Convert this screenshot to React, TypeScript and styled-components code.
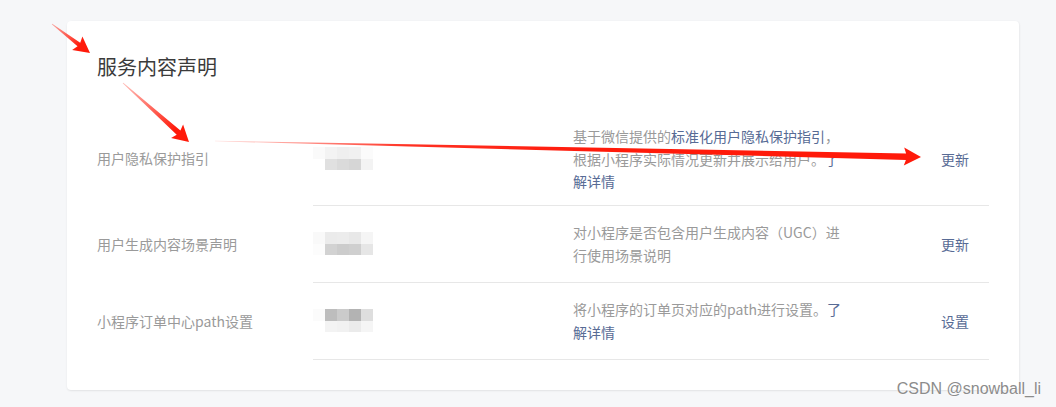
import * as React from 'react';
import styled, { createGlobalStyle } from 'styled-components';

const GlobalStyle = createGlobalStyle`
  html, body {
    margin: 0;
    padding: 0;
    background: #f6f7f9;
  }
  body {
    font-family: "Noto Sans CJK SC", "Noto Sans", sans-serif;
    -webkit-font-smoothing: antialiased;
  }
`;

const Page = styled.main`
  position: relative;
  width: 1056px;
  height: 407px;
  box-sizing: border-box;
  padding: 21px 37px 0 67px;
  overflow: hidden;
`;

const Card = styled.section`
  background: #fff;
  border-radius: 4px;
  box-shadow: 0 1px 2px rgba(0, 0, 0, 0.08), 1px 0 2px rgba(0, 0, 0, 0.03);
  padding: 32px 30px 30px 30px;
`;

const Title = styled.h2`
  margin: 0 0 28.5px 0;
  font-size: 20px;
  line-height: 28px;
  font-weight: 400;
  color: #3b3b3b;
`;

const List = styled.div`
  display: flex;
  flex-direction: column;
`;

const Row = styled.div`
  display: grid;
  grid-template-columns: 216px 1fr;
  align-items: stretch;

  &:first-child > div:last-child {
    padding-bottom: 12px;
  }
`;

const Label = styled.div`
  display: flex;
  align-items: center;
  font-size: 14px;
  color: #9a9a9a;
  white-space: nowrap;
`;

const Content = styled.div`
  display: grid;
  grid-template-columns: 260px 368px 1fr;
  align-items: center;
  padding: 15.5px 0 15.5px 0;
  border-bottom: 1px solid #e7e7e7;
`;

const Value = styled.div`
  display: flex;
  align-items: center;
`;

const MosaicGrid = styled.div`
  display: grid;
  grid-template-columns: 12px 12px 12px 12px 12px;
  grid-template-rows: 12px 11px;
`;

const Cell = styled.span<{ $c: string }>`
  background: ${(p) => p.$c};
`;

const Desc = styled.div`
  width: 275px;
  font-size: 14px;
  line-height: 22.5px;
  color: #9a9a9a;
`;

const Link = styled.a`
  color: #576b95;
  text-decoration: none;
  cursor: pointer;
`;

const Action = styled.a`
  font-size: 14px;
  color: #576b95;
  cursor: pointer;
`;

const Overlay = styled.svg`
  position: absolute;
  left: 0;
  top: 0;
  pointer-events: none;
`;

const Watermark = styled.div`
  position: absolute;
  right: 15px;
  bottom: 9px;
  font-family: "Liberation Sans", Arial, sans-serif;
  font-size: 16px;
  color: #8c8c8c;
  text-shadow: 0 0 2px #fff;
  pointer-events: none;
`;

type Item = {
  label: string;
  mosaic: string[][];
  desc: React.ReactNode;
  action: string;
};

const items: Item[] = [
  {
    label: '用户隐私保护指引',
    mosaic: [
      ['#fafafa', '#f3f3f3', '#efefef', '#f1f1f1', '#fbfbfb'],
      ['#ffffff', '#e0e0e0', '#dadada', '#d6d6d6', '#f3f3f3'],
    ],
    desc: (
      <>
        基于微信提供的<Link>标准化用户隐私保护指引</Link>，根据小程序实际情况更新并展示给用户。
        <Link>了解详情</Link>
      </>
    ),
    action: '更新',
  },
  {
    label: '用户生成内容场景声明',
    mosaic: [
      ['#f9f9f9', '#ebebeb', '#ececec', '#e8e8e8', '#f5f5f5'],
      ['#fcfcfc', '#d2d2d2', '#cccccc', '#cfcfcf', '#e6e6e6'],
    ],
    desc: <>对小程序是否包含用户生成内容（UGC）进行使用场景说明</>,
    action: '更新',
  },
  {
    label: '小程序订单中心path设置',
    mosaic: [
      ['#fbfbfb', '#bdbdbd', '#cbcbcb', '#b3b3b3', '#dedede'],
      ['#ffffff', '#f3f3f3', '#f1f1f1', '#ebebeb', '#f5f5f5'],
    ],
    desc: (
      <>
        将小程序的订单页对应的path进行设置。<Link>了解详情</Link>
      </>
    ),
    action: '设置',
  },
];

type Pt = [number, number];

// tapered arrow: thin tail, wider shaft near the head, triangular head
function arrowPoints(tail: Pt, tip: Pt, headLen: number, headHalf: number, w0: number, w1: number) {
  const dx = tip[0] - tail[0];
  const dy = tip[1] - tail[1];
  const len = Math.hypot(dx, dy);
  const ux = dx / len;
  const uy = dy / len;
  const nx = -uy;
  const ny = ux;
  const bx = tip[0] - ux * headLen;
  const by = tip[1] - uy * headLen;
  const p = (x: number, y: number) => `${x.toFixed(1)},${y.toFixed(1)}`;
  return [
    p(tail[0] + nx * w0 / 2, tail[1] + ny * w0 / 2),
    p(bx + nx * w1 / 2, by + ny * w1 / 2),
    p(bx + nx * headHalf - ux * 2, by + ny * headHalf - uy * 2),
    p(tip[0], tip[1]),
    p(bx - nx * headHalf - ux * 2, by - ny * headHalf - uy * 2),
    p(bx - nx * w1 / 2, by - ny * w1 / 2),
    p(tail[0] - nx * w0 / 2, tail[1] - ny * w0 / 2),
  ].join(' ');
}

function Arrows() {
  return (
    <Overlay width="1056" height="407" viewBox="0 0 1056 407">
      <defs>
        <linearGradient id="fadeA" gradientUnits="userSpaceOnUse" x1="52" y1="24" x2="80" y2="45">
          <stop offset="0" stopColor="#ff2a1a" stopOpacity="0.4" />
          <stop offset="1" stopColor="#ff1a0a" />
        </linearGradient>
        <linearGradient id="fadeB" gradientUnits="userSpaceOnUse" x1="123" y1="83" x2="175" y2="130">
          <stop offset="0" stopColor="#ff2a1a" stopOpacity="0.3" />
          <stop offset="1" stopColor="#ff1a0a" />
        </linearGradient>
        <linearGradient id="fadeC" gradientUnits="userSpaceOnUse" x1="215" y1="141" x2="600" y2="150">
          <stop offset="0" stopColor="#ff2a1a" stopOpacity="0.15" />
          <stop offset="0.5" stopColor="#ff1a0a" stopOpacity="0.9" />
          <stop offset="1" stopColor="#ff1a0a" />
        </linearGradient>
      </defs>
      <polygon points={arrowPoints([52, 24], [90, 53], 14, 8.5, 0.8, 4.5)} fill="url(#fadeA)" />
      <polygon points={arrowPoints([123, 83], [189, 142], 14, 9, 0.8, 5.5)} fill="url(#fadeB)" />
      <polygon points={arrowPoints([215, 141], [921, 157], 15, 9, 0.6, 6.5)} fill="url(#fadeC)" />
    </Overlay>
  );
}

function Mosaic({ cells }: { cells: string[][] }) {
  return (
    <MosaicGrid>
      {cells.flat().map((c, i) => (
        <Cell key={i} $c={c} />
      ))}
    </MosaicGrid>
  );
}

function App() {
  return (
    <Page>
      <GlobalStyle />
      <Card>
        <Title>服务内容声明</Title>
        <List>
          {items.map((it) => (
            <Row key={it.label}>
              <Label>{it.label}</Label>
              <Content>
                <Value>
                  <Mosaic cells={it.mosaic} />
                </Value>
                <Desc>{it.desc}</Desc>
                <Action>{it.action}</Action>
              </Content>
            </Row>
          ))}
        </List>
      </Card>
      <Arrows />
      <Watermark>CSDN @snowball_li</Watermark>
    </Page>
  );
}

export default App;
